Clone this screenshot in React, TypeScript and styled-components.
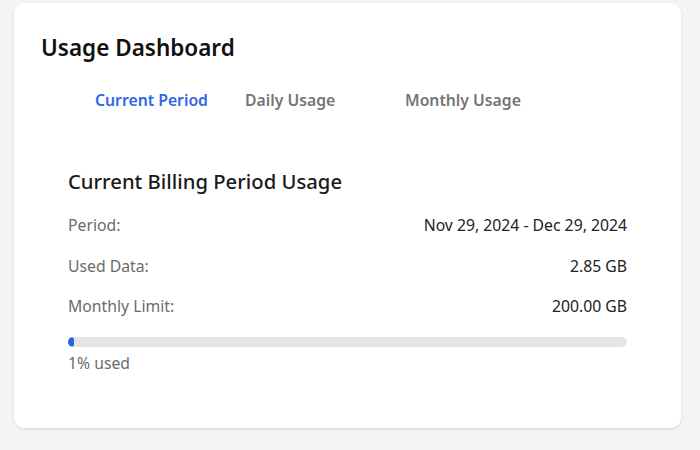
import React from "react";
import styled, { createGlobalStyle } from "styled-components";

const Global = createGlobalStyle`
  html, body { margin: 0; padding: 0; background: #f4f4f4; }
  body { font-family: "Noto Sans", "Open Sans", sans-serif; }
`;

const Page = styled.div`
  padding: 3px 19px 20px 14px;
`;

const Card = styled.div`
  background: #ffffff;
  border-radius: 10px;
  box-shadow: 0 1px 3px rgba(0, 0, 0, 0.12);
  padding: 29px 27px 36px 27px;
  box-sizing: border-box;
  height: 425px;
`;

const Title = styled.h1`
  margin: 0;
  font-size: 22.5px;
  font-weight: 600;
  line-height: 32px;
  color: #111;
`;

const TabList = styled.div`
  display: flex;
  margin-top: 24px;
  padding-left: 54px;
`;

const Tab = styled.button<{ $active?: boolean; $w: number }>`
  all: unset;
  width: ${(p) => p.$w}px;
  font-family: inherit;
  font-size: 15.75px;
  font-weight: 600;
  line-height: 24px;
  color: ${(p) => (p.$active ? "#2f66e8" : "#757575")};
  cursor: pointer;
`;

const Section = styled.div`
  padding: 0 27px;
  margin-top: 55px;
`;

const SectionTitle = styled.h2`
  margin: 0 0 10px 0;
  font-size: 20.25px;
  font-weight: 500;
  line-height: 28px;
  color: #1a1a1a;
`;

const Row = styled.div`
  display: flex;
  justify-content: space-between;
  align-items: center;
  height: 40.5px;
  font-size: 15.75px;
`;

const Label = styled.span`
  color: #6b6b6b;
`;

const Value = styled.span`
  color: #222;
`;

const Track = styled.div`
  margin-top: 10px;
  height: 10px;
  background: #e5e5e5;
  border-radius: 5px;
  overflow: hidden;
`;

const Fill = styled.div`
  height: 100%;
  background: #2563eb;
  border-radius: 5px;
`;

const Caption = styled.div`
  margin-top: 4px;
  font-size: 15.75px;
  line-height: 24px;
  color: #6b6b6b;
`;

export default function App() {
  const used = 2.85;
  const limit = 200;
  const pct = Math.max(1, Math.round((used / limit) * 100));
  return (
    <>
      <Global />
      <Page>
        <Card>
          <Title>Usage Dashboard</Title>
          <TabList>
            <Tab $active $w={150}>Current Period</Tab>
            <Tab $w={160}>Daily Usage</Tab>
            <Tab $w={140}>Monthly Usage</Tab>
          </TabList>
          <Section>
            <SectionTitle>Current Billing Period Usage</SectionTitle>
            <Row>
              <Label>Period:</Label>
              <Value>Nov 29, 2024 - Dec 29, 2024</Value>
            </Row>
            <Row>
              <Label>Used Data:</Label>
              <Value>2.85 GB</Value>
            </Row>
            <Row>
              <Label>Monthly Limit:</Label>
              <Value>200.00 GB</Value>
            </Row>
            <Track>
              <Fill style={{ width: `${pct}%` }} />
            </Track>
            <Caption>{pct}% used</Caption>
          </Section>
        </Card>
      </Page>
    </>
  );
}
